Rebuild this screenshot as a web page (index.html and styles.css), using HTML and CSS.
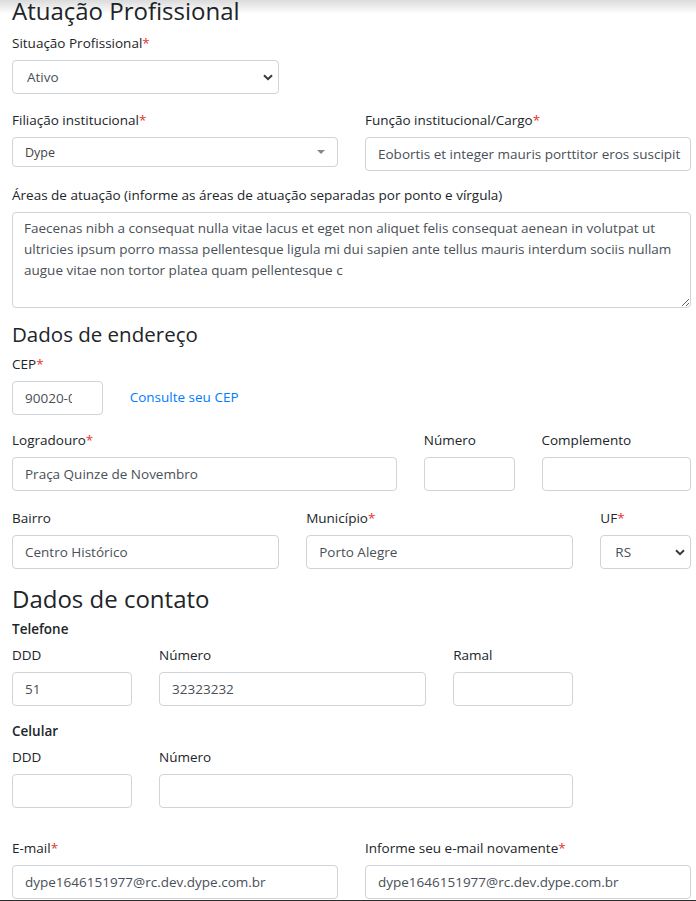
FILE: index.html
```html
<!DOCTYPE html>
<html lang="pt-BR">
<head>
<meta charset="utf-8">
<title>Cadastro</title>
<link rel="stylesheet" href="styles.css">
</head>
<body>
<div class="topshade"></div>
<main class="page">
  <h2 class="h-main">Atuação Profissional</h2>
  <div class="row">
    <div class="group c5">
      <label class="lbl">Situação Profissional<span class="req">*</span></label>
      <div class="selwrap">
        <select class="ctl sel"><option>Ativo</option></select>
        <svg class="chev" width="10" height="7" viewBox="0 0 10 7"><path d="M1 1.2 L5 5.2 L9 1.2" fill="none" stroke="#343a40" stroke-width="2"/></svg>
      </div>
    </div>
  </div>
  <div class="row row-fil">
    <div class="group c6">
      <label class="lbl">Filiação institucional<span class="req">*</span></label>
      <div class="s2"><span class="s2-text">Dype</span><span class="s2-caret"></span></div>
    </div>
    <div class="group c6">
      <label class="lbl">Função institucional/Cargo<span class="req">*</span></label>
      <input class="ctl cargo" type="text" value="Eobortis et integer mauris porttitor eros suscipit">
    </div>
  </div>
  <div class="group">
    <label class="lbl">Áreas de atuação (informe as áreas de atuação separadas por ponto e vírgula)</label>
    <textarea class="ctl ta">Faecenas nibh a consequat nulla vitae lacus et eget non aliquet felis consequat aenean in volutpat ut ultricies ipsum porro massa pellentesque ligula mi dui sapien ante tellus mauris interdum sociis nullam augue vitae non tortor platea quam pellentesque c</textarea>
  </div>

  <h3 class="h-sec">Dados de endereço</h3>
  <div class="row">
    <div class="group c2">
      <label class="lbl">CEP<span class="req">*</span></label>
      <input class="ctl cep" type="text" value="90020-090">
    </div>
    <div class="c4 cep-link"><a href="#" class="link">Consulte seu CEP</a></div>
  </div>
  <div class="row">
    <div class="group c7">
      <label class="lbl">Logradouro<span class="req">*</span></label>
      <input class="ctl" type="text" value="Praça Quinze de Novembro">
    </div>
    <div class="group c2">
      <label class="lbl">Número</label>
      <input class="ctl" type="text" value="">
    </div>
    <div class="group c3">
      <label class="lbl">Complemento</label>
      <input class="ctl" type="text" value="">
    </div>
  </div>
  <div class="row row-addr">
    <div class="group c5">
      <label class="lbl">Bairro</label>
      <input class="ctl" type="text" value="Centro Histórico">
    </div>
    <div class="group c5">
      <label class="lbl">Município<span class="req">*</span></label>
      <input class="ctl" type="text" value="Porto Alegre">
    </div>
    <div class="group c2">
      <label class="lbl">UF<span class="req">*</span></label>
      <div class="selwrap">
        <select class="ctl sel"><option>RS</option></select>
        <svg class="chev" width="10" height="7" viewBox="0 0 10 7"><path d="M1 1.2 L5 5.2 L9 1.2" fill="none" stroke="#343a40" stroke-width="2"/></svg>
      </div>
    </div>
  </div>

  <h3 class="h-big">Dados de contato</h3>
  <div class="sub">Telefone</div>
  <div class="row">
    <div class="c10 row">
      <div class="group c3">
        <label class="lbl">DDD</label>
        <input class="ctl" type="text" value="51">
      </div>
      <div class="group c6">
        <label class="lbl">Número</label>
        <input class="ctl" type="text" value="32323232">
      </div>
      <div class="group c3">
        <label class="lbl">Ramal</label>
        <input class="ctl" type="text" value="">
      </div>
    </div>
  </div>
  <div class="sub">Celular</div>
  <div class="row">
    <div class="c10 row">
      <div class="group c3">
        <label class="lbl">DDD</label>
        <input class="ctl" type="text" value="">
      </div>
      <div class="group c9">
        <label class="lbl">Número</label>
        <input class="ctl" type="text" value="">
      </div>
    </div>
  </div>
  <div class="row email-row">
    <div class="group c6">
      <label class="lbl">E-mail<span class="req">*</span></label>
      <input class="ctl" type="text" value="dype1646151977@rc.dev.dype.com.br">
    </div>
    <div class="group c6">
      <label class="lbl">Informe seu e-mail novamente<span class="req">*</span></label>
      <input class="ctl" type="text" value="dype1646151977@rc.dev.dype.com.br">
    </div>
  </div>
</main>
<div class="bottomline"></div>
</body>
</html>
```
FILE: styles.css
```css
* { box-sizing: border-box; }
html, body { margin: 0; padding: 0; background: #fff; }
body {
  font-family: "Open Sans", "Noto Sans", sans-serif;
  font-size: 13.5px;
  color: #212529;
  overflow: hidden;
}
.page { width: 679px; margin-left: 12px; }
.topshade {
  position: fixed; left: 0; right: 0; top: 0; height: 14px;
  background: linear-gradient(rgba(0,0,0,0.14), rgba(0,0,0,0));
  pointer-events: none; z-index: 5;
}
.bottomline {
  position: fixed; left: 0; right: 0; bottom: 0; height: 1px;
  background: #2b2b2b; z-index: 5;
}
.h-main {
  font-size: 24px; font-weight: 500; line-height: 28px;
  margin: -3px 0 8px 0;
}
.h-sec {
  font-size: 20.5px; font-weight: 500; line-height: 22px;
  margin: 0 0 9px 0;
}
.h-big {
  font-size: 24px; font-weight: 500; line-height: 28px;
  margin: 1px 0 6px 0;
}
.sub { font-weight: 600; line-height: 20px; margin: 0 0 6px 0; }
.row {
  display: grid;
  grid-template-columns: repeat(12, minmax(0, 1fr));
  column-gap: 27px;
}
.c2 { grid-column: span 2; }
.c3 { grid-column: span 3; }
.c4 { grid-column: span 4; }
.c5 { grid-column: span 5; }
.c6 { grid-column: span 6; }
.c7 { grid-column: span 7; }
.c9 { grid-column: span 9; }
.c10 { grid-column: span 10; }
.group { margin-bottom: 15px; min-width: 0; }
.row-fil { margin-top: 1px; }
.row-fil + .group { margin-top: -1px; }
.row-addr { margin-top: 2px; }
.lbl { display: block; line-height: 20px; margin-bottom: 7px; white-space: nowrap; }
.req { color: #e3342f; }
.ctl {
  display: block; width: 100%; height: 34px;
  padding: 0 12px;
  font-family: inherit; font-size: 13.5px; color: #495057;
  background: #fff; border: 1px solid #ced4da; border-radius: 4px;
  outline: none; margin: 0;
}
.cargo { padding-right: 8px; }
.cep { padding-right: 30px; }
.selwrap { position: relative; }
.sel { appearance: none; -webkit-appearance: none; padding-left: 14px; }
.chev { position: absolute; right: 6px; top: 14px; pointer-events: none; }
.s2 {
  display: flex; align-items: center; justify-content: space-between;
  height: 30px; padding: 0 12px 0 12px;
  border: 1px solid #ced4da; border-radius: 4px; color: #444;
  font-size: 12.5px;
}
.s2-caret {
  width: 0; height: 0;
  border-left: 4px solid transparent; border-right: 4px solid transparent;
  border-top: 4px solid #888;
}
.ta {
  height: 96px; padding: 5px 11px; line-height: 21px; resize: vertical;
  overflow: hidden;
}
.cep-link { padding-top: 34px; }
.link { color: #007bff; text-decoration: none; }
.email-row { margin-top: 15px; }
```
